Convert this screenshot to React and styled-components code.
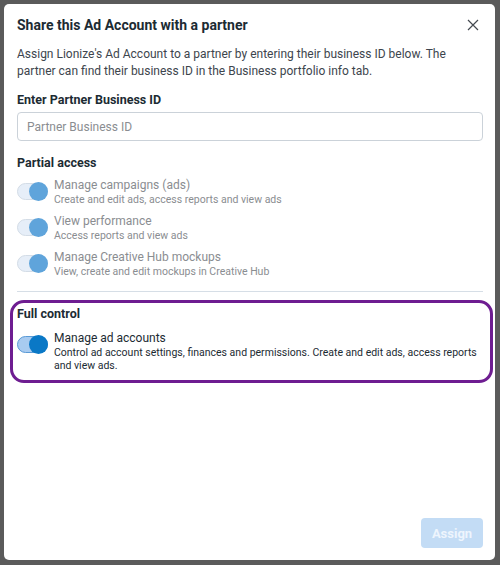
import React, { useState } from 'react';
import styled, { createGlobalStyle } from 'styled-components';

const GlobalStyle = createGlobalStyle`
  html, body {
    margin: 0;
    padding: 0;
    background: #5b5b5b;
  }
  body {
    font-family: Roboto, "Liberation Sans", Arial, sans-serif;
    color: #1c2b33;
  }
`;

const partialItems = [
  { title: 'Manage campaigns (ads)', desc: 'Create and edit ads, access reports and view ads' },
  { title: 'View performance', desc: 'Access reports and view ads' },
  { title: 'Manage Creative Hub mockups', desc: 'View, create and edit mockups in Creative Hub' },
];

function Toggle({ strong }) {
  return (
    <Track $strong={strong}>
      <Knob $strong={strong} />
    </Track>
  );
}

function PermissionRow({ title, desc, muted, strong }) {
  return (
    <Row>
      <Toggle strong={strong} />
      <RowText>
        <RowTitle $muted={muted}>{title}</RowTitle>
        <RowDesc $muted={muted}>{desc}</RowDesc>
      </RowText>
    </Row>
  );
}

export default function App() {
  const [partnerId, setPartnerId] = useState('');
  return (
    <>
      <GlobalStyle />
      <Backdrop>
        <Modal>
          <Header>
            <Title>Share this Ad Account with a partner</Title>
            <Close aria-label="Close">
              <svg width="12" height="12" viewBox="0 0 12 12">
                <path d="M1 1 L11 11 M11 1 L1 11" stroke="#444950" strokeWidth="1.2" />
              </svg>
            </Close>
          </Header>
          <Intro>
            Assign Lionize's Ad Account to a partner by entering their business ID below. The
            partner can find their business ID in the Business portfolio info tab.
          </Intro>
          <SectionLabel $top={12}>Enter Partner Business ID</SectionLabel>
          <Input
            placeholder="Partner Business ID"
            value={partnerId}
            onChange={(e) => setPartnerId(e.target.value)}
          />
          <SectionLabel $top={14}>Partial access</SectionLabel>
          <List>
            {partialItems.map((item) => (
              <PermissionRow key={item.title} title={item.title} desc={item.desc} muted />
            ))}
          </List>
          <Divider />
          <Highlight>
            <SectionLabel $top={0}>Full control</SectionLabel>
            <PermissionRow
              strong
              title="Manage ad accounts"
              desc={
                <>
                  Control ad account settings, finances and permissions. Create and edit ads, access reports
                  <br />
                  and view ads.
                </>
              }
            />
          </Highlight>
          <Footer>
            <AssignButton disabled>Assign</AssignButton>
          </Footer>
        </Modal>
      </Backdrop>
    </>
  );
}

const Backdrop = styled.div`
  width: 500px;
  height: 565px;
  padding: 4px 5px 5px 4px;
  box-sizing: border-box;
`;

const Modal = styled.div`
  height: 100%;
  background: #ffffff;
  border-radius: 5px;
  box-sizing: border-box;
  padding: 12px 12px 12px 13px;
  display: flex;
  flex-direction: column;
`;

const Header = styled.div`
  display: flex;
  align-items: center;
  justify-content: space-between;
  height: 18px;
`;

const Title = styled.h2`
  margin: 0;
  font-size: 14px;
  font-weight: 700;
  color: #1c2b33;
`;

const Close = styled.button`
  border: none;
  background: none;
  padding: 0;
  margin-right: 4px;
  display: flex;
  cursor: pointer;
`;

const Intro = styled.p`
  margin: 12px 0 0;
  font-size: 12px;
  line-height: 17px;
  color: #3d454d;
`;

const SectionLabel = styled.div`
  margin-top: ${(p) => p.$top}px;
  font-size: 12.5px;
  font-weight: 700;
  color: #1c2b33;
  line-height: 16px;
`;

const Input = styled.input`
  margin-top: 4px;
  height: 29px;
  box-sizing: border-box;
  border: 1px solid #cbd2d9;
  border-radius: 4px;
  padding: 0 9px;
  font-family: inherit;
  font-size: 12px;
  color: #1c2b33;
  outline: none;
  &::placeholder {
    color: #8a8d91;
  }
`;

const List = styled.div`
  display: flex;
  flex-direction: column;
  gap: 8px;
  margin-top: 7px;
`;

const Row = styled.div`
  display: flex;
  align-items: flex-start;
  gap: 6px;
`;

const Track = styled.div`
  flex: none;
  margin-top: 5px;
  width: 31px;
  height: 17px;
  border-radius: 9px;
  box-sizing: border-box;
  border: 1px solid ${(p) => (p.$strong ? '#5a9ad6' : '#d3dce6')};
  background: ${(p) => (p.$strong ? '#a8cbf0' : '#e6eef8')};
  position: relative;
`;

const Knob = styled.div`
  position: absolute;
  top: -2px;
  right: -1px;
  width: 19px;
  height: 19px;
  border-radius: 50%;
  background: ${(p) => (p.$strong ? '#0a78c6' : '#5fa4db')};
`;

const RowText = styled.div`
  flex: 1;
  min-width: 0;
  display: flex;
  flex-direction: column;
`;

const RowTitle = styled.div`
  font-size: 12px;
  line-height: 15px;
  color: ${(p) => (p.$muted ? '#8a8d91' : '#1c2b33')};
`;

const RowDesc = styled.div`
  font-size: 10.5px;
  line-height: 13px;
  white-space: ${(p) => (p.$muted ? 'normal' : 'nowrap')};
  color: ${(p) => (p.$muted ? '#8a8d91' : '#1c2b33')};
`;

const Divider = styled.hr`
  margin: 13px 0 0;
  border: none;
  border-top: 1px solid #d6dee6;
`;

const Highlight = styled.div`
  margin: 8px -10px 0 -7px;
  padding: 3px 2px 8px 4px;
  border: 3px solid #6e1d91;
  border-radius: 14px;
  display: flex;
  flex-direction: column;
  gap: 9px;
`;

const Footer = styled.div`
  margin-top: auto;
  display: flex;
  justify-content: flex-end;
`;

const AssignButton = styled.button`
  width: 62px;
  height: 30px;
  border: none;
  border-radius: 4px;
  background: #c3dcf5;
  color: #eef5fd;
  font-family: inherit;
  font-size: 13px;
  font-weight: 700;
`;
